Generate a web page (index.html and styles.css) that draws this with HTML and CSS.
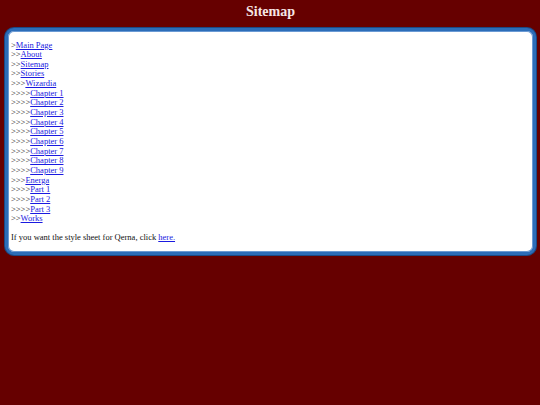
FILE: index.html
```html
<!DOCTYPE html>
<html>
<head>
<meta charset="utf-8">
<title>Sitemap</title>
<link rel="stylesheet" href="styles.css">
</head>
<body>
<h1 class="title">Sitemap</h1>
<div class="box">
  <div class="tree">
    <div>&gt;<a href="#">Main Page</a></div>
    <div>&gt;&gt;<a href="#">About</a></div>
    <div>&gt;&gt;<a href="#">Sitemap</a></div>
    <div>&gt;&gt;<a href="#">Stories</a></div>
    <div>&gt;&gt;&gt;<a href="#">Wizardia</a></div>
    <div>&gt;&gt;&gt;&gt;<a href="#">Chapter 1</a></div>
    <div>&gt;&gt;&gt;&gt;<a href="#">Chapter 2</a></div>
    <div>&gt;&gt;&gt;&gt;<a href="#">Chapter 3</a></div>
    <div>&gt;&gt;&gt;&gt;<a href="#">Chapter 4</a></div>
    <div>&gt;&gt;&gt;&gt;<a href="#">Chapter 5</a></div>
    <div>&gt;&gt;&gt;&gt;<a href="#">Chapter 6</a></div>
    <div>&gt;&gt;&gt;&gt;<a href="#">Chapter 7</a></div>
    <div>&gt;&gt;&gt;&gt;<a href="#">Chapter 8</a></div>
    <div>&gt;&gt;&gt;&gt;<a href="#">Chapter 9</a></div>
    <div>&gt;&gt;&gt;<a href="#">Energa</a></div>
    <div>&gt;&gt;&gt;&gt;<a href="#">Part 1</a></div>
    <div>&gt;&gt;&gt;&gt;<a href="#">Part 2</a></div>
    <div>&gt;&gt;&gt;&gt;<a href="#">Part 3</a></div>
    <div>&gt;&gt;<a href="#">Works</a></div>
  </div>
  <p class="note">If you want the style sheet for Qerna, click <a href="#">here.</a></p>
</div>
</body>
</html>
```

FILE: styles.css
```css
html, body {
  background: #660000;
}
body {
  margin: 0;
  padding: 0 3px 0 4px;
  font-family: "Liberation Serif", "Times New Roman", serif;
}
.title {
  margin: 0 0 5px;
  padding-top: 1px;
  font-size: 14px;
  line-height: 22px;
  font-weight: bold;
  text-align: center;
  color: #f6e6e6;
}
.box {
  background: #ffffff;
  border: 3px solid #2c6db8;
  border-radius: 9px;
  box-shadow: 0 0 0 1px #1b4a86, inset 0 0 0 1px #6a9ad4;
  margin: 1px;
  padding: 9.5px 3px 9.5px;
  font-size: 8.5px;
  color: #111;
}
.tree div {
  line-height: 9.67px;
  height: 9.67px;
}
.box a {
  color: #1a1ae0;
  text-decoration: underline;
}
.note {
  margin: 9px 0 0;
  line-height: 9.67px;
}
```
